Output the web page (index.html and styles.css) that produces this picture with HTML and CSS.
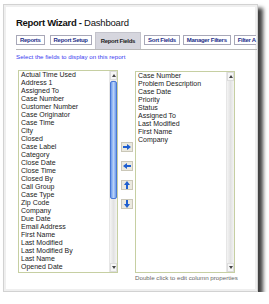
FILE: index.html
```html
<!DOCTYPE html>
<html lang="en">

<head>
    <meta charset="UTF-8">
    <title>Report Wizard - Dashboard</title>
    <link rel="stylesheet" href="styles.css">
</head>

<body>
    <div class="window">
        <div class="title"><b>Report Wizard -</b> Dashboard</div>

        <div class="tabs">
            <div class="tab">Reports</div>
            <div class="tab">Report Setup</div>
            <div class="tab active">Report Fields</div>
            <div class="tab">Sort Fields</div>
            <div class="tab">Manager Filters</div>
            <div class="tab last">Filter A</div>
        </div>

        <div class="hint">Select the fields to display on this report</div>

        <div class="fields">
            <!-- available fields -->
            <div class="listbox available">
                <div class="items">
                    <div>Actual Time Used</div>
                    <div>Address 1</div>
                    <div>Assigned To</div>
                    <div>Case Number</div>
                    <div>Customer Number</div>
                    <div>Case Originator</div>
                    <div>Case Time</div>
                    <div>City</div>
                    <div>Closed</div>
                    <div>Case Label</div>
                    <div>Category</div>
                    <div>Close Date</div>
                    <div>Close Time</div>
                    <div>Closed By</div>
                    <div>Call Group</div>
                    <div>Case Type</div>
                    <div>Zip Code</div>
                    <div>Company</div>
                    <div>Due Date</div>
                    <div>Email Address</div>
                    <div>First Name</div>
                    <div>Last Modified</div>
                    <div>Last Modified By</div>
                    <div>Last Name</div>
                    <div>Opened Date</div>
                </div>
                <div class="scrollbar">
                    <div class="sb-btn"><svg width="4" height="3" viewBox="0 0 4 3"><path d="M2 0 L4 3 L0 3 Z" fill="#444"/></svg></div>
                    <div class="thumb"></div>
                    <div class="track"></div>
                    <div class="sb-btn"><svg width="4" height="3" viewBox="0 0 4 3"><path d="M0 0 L4 0 L2 3 Z" fill="#444"/></svg></div>
                </div>
            </div>

            <!-- move buttons -->
            <div class="buttons">
                <div class="move-btn">
                    <svg width="8" height="6" viewBox="0 0 8 6"><path d="M0 2 H4 V0 L8 3 L4 6 V4 H0 Z" fill="#1f5fd0"/></svg>
                </div>
                <div class="move-btn">
                    <svg width="8" height="6" viewBox="0 0 8 6"><path d="M8 2 H4 V0 L0 3 L4 6 V4 H8 Z" fill="#1f5fd0"/></svg>
                </div>
                <div class="move-btn">
                    <svg width="6" height="8" viewBox="0 0 6 8"><path d="M2 8 V4 H0 L3 0 L6 4 H4 V8 Z" fill="#1f5fd0"/></svg>
                </div>
                <div class="move-btn">
                    <svg width="6" height="8" viewBox="0 0 6 8"><path d="M2 0 V4 H0 L3 8 L6 4 H4 V0 Z" fill="#1f5fd0"/></svg>
                </div>
            </div>

            <!-- selected fields -->
            <div class="selected-col">
                <div class="listbox selected">
                    <div class="items">
                        <div>Case Number</div>
                        <div>Problem Description</div>
                        <div>Case Date</div>
                        <div>Priority</div>
                        <div>Status</div>
                        <div>Assigned To</div>
                        <div>Last Modified</div>
                        <div>First Name</div>
                        <div>Company</div>
                    </div>
                    <div class="scrollbar">
                        <div class="sb-btn"><svg width="4" height="3" viewBox="0 0 4 3"><path d="M2 0 L4 3 L0 3 Z" fill="#444"/></svg></div>
                        <div class="track"></div>
                        <div class="sb-btn"><svg width="4" height="3" viewBox="0 0 4 3"><path d="M0 0 L4 0 L2 3 Z" fill="#444"/></svg></div>
                    </div>
                </div>
                <div class="note">Double click to edit column properties</div>
            </div>
        </div>
    </div>
</body>

</html>
```

FILE: styles.css
```css
* {
    box-sizing: border-box;
}

body {
    margin: 0;
    padding: 0;
    background-color: #fff;
    font-family: "Liberation Sans", Arial, sans-serif;
}

.window {
    width: 255px;
    height: 288px;
    margin: 4px 0 0 3px;
    padding: 12px 0 0 12px;
    background-color: #fff;
    border: 1px solid #d2d2d2;
    box-shadow: inset 0 0 0 2px #efefef, 5px 4px 4px rgba(0, 0, 0, 0.75);
    overflow: hidden;
}

.title {
    font-size: 9.5px;
    line-height: 12px;
    letter-spacing: -0.2px;
    color: #111;
    white-space: nowrap;
}

.title b {
    letter-spacing: -0.3px;
}

.tabs {
    display: flex;
    align-items: flex-end;
    gap: 3px;
    height: 18px;
    margin-top: 3px;
    border-bottom: 1px solid #b8b8b8;
    white-space: nowrap;
}

.tab {
    flex-shrink: 0;
    height: 10px;
    margin-bottom: 4px;
    padding: 0 3px;
    border: 1px solid #a8a8b8;
    font-size: 6px;
    font-weight: bold;
    line-height: 8px;
    letter-spacing: -0.3px;
    color: #26308a;
    background-color: #fff;
}

.tab:first-child {
    margin-right: 2px;
}

.tab.last {
    border-right: none;
    padding-right: 0;
}

.tab.active {
    height: 17px;
    margin-bottom: 0;
    padding: 0 5px;
    border-color: #c4c4cc;
    border-bottom: none;
    line-height: 16px;
    color: #222;
    background-color: #d6d6de;
}

.hint {
    margin-top: 3px;
    font-size: 6.2px;
    line-height: 8px;
    color: #3b3bf0;
    white-space: nowrap;
}

.fields {
    display: flex;
    margin-top: 9px;
    margin-left: 2px;
}

.listbox {
    display: flex;
    width: 100px;
    border: 1px solid #c6cfa2;
    background-color: #fff;
}

.listbox.available {
    height: 203px;
}

.listbox.selected {
    height: 202px;
    margin-top: 1px;
}

.items {
    flex: 1;
    padding-left: 2px;
    font-size: 7px;
    line-height: 8px;
    color: #222;
    white-space: nowrap;
    overflow: hidden;
}

.scrollbar {
    display: flex;
    flex-direction: column;
    width: 8px;
    background: linear-gradient(to right, #f4f4f4, #e2e2e2 50%, #f4f4f4);
    border-left: 1px solid #e6e6e6;
}

.sb-btn {
    display: flex;
    justify-content: center;
    align-items: center;
    height: 9px;
    background: #f6f6f6;
    border: 1px solid #dcdcdc;
}

.thumb {
    height: 118px;
    margin: 1px 0 0;
    border: 1px solid #4a79d6;
    border-radius: 2px;
    background: linear-gradient(to right, #6c9cec, #b8d2f8 50%, #6c9cec);
}

.track {
    flex: 1;
}

.buttons {
    display: flex;
    flex-direction: column;
    gap: 9px;
    width: 12px;
    margin: 0 2px 0 3px;
    padding-top: 72px;
}

.move-btn {
    display: flex;
    justify-content: center;
    align-items: center;
    height: 10px;
    border: 1px solid #cac7b8;
    background-color: #ebe9df;
}

.note {
    margin-top: 1px;
    font-size: 6.2px;
    line-height: 8px;
    color: #666;
    white-space: nowrap;
}
```
